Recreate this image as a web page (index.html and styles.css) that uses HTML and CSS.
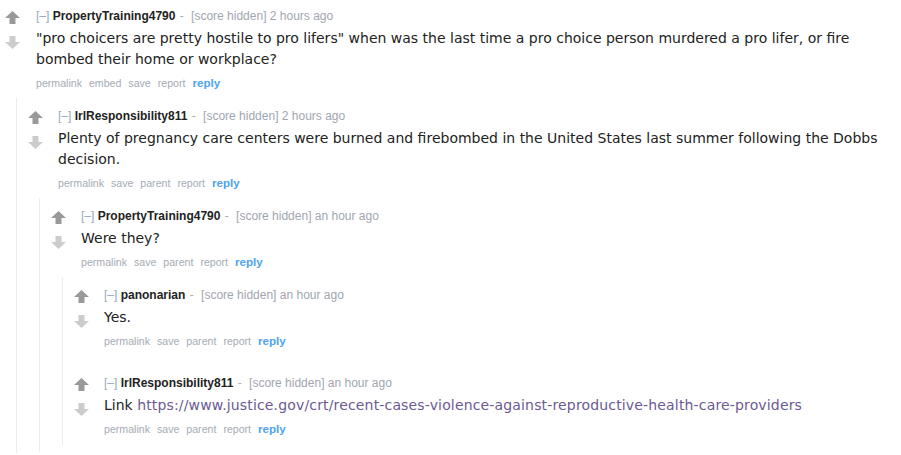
FILE: index.html
```html
<!DOCTYPE html>
<html lang="en">
<head>
  <meta charset="UTF-8">
  <title>comments</title>
  <link rel="stylesheet" href="styles.css">
</head>
<body>
  <div class="commentarea">
    <div class="comment">
      <div class="entry">
        <div class="midcol">
          <svg class="arrow up" viewBox="0 0 15 13"><path d="M7.5 0 L15 7 L10.5 7 L10.5 13 L4.5 13 L4.5 7 L0 7 Z"/></svg>
          <svg class="arrow down" viewBox="0 0 15 13"><path d="M4.5 0 L10.5 0 L10.5 6 L15 6 L7.5 13 L0 6 L4.5 6 Z"/></svg>
        </div>
        <div class="content">
          <p class="tagline"><a class="expand">[&ndash;]</a> <a class="author">PropertyTraining4790</a><span class="sep"> - </span><span class="score">[score hidden]</span> <time>2 hours ago</time></p>
          <div class="md"><p>"pro choicers are pretty hostile to pro lifers" when was the last time a pro choice person murdered a pro lifer, or fire bombed their home or workplace?</p></div>
          <ul class="buttons">
            <li><a>permalink</a></li>
            <li><a>embed</a></li>
            <li><a>save</a></li>
            <li><a>report</a></li>
            <li><a class="reply">reply</a></li>
          </ul>
        </div>
      </div>
      <div class="child">
        <div class="comment">
          <div class="entry">
            <div class="midcol">
              <svg class="arrow up" viewBox="0 0 15 13"><path d="M7.5 0 L15 7 L10.5 7 L10.5 13 L4.5 13 L4.5 7 L0 7 Z"/></svg>
              <svg class="arrow down" viewBox="0 0 15 13"><path d="M4.5 0 L10.5 0 L10.5 6 L15 6 L7.5 13 L0 6 L4.5 6 Z"/></svg>
            </div>
            <div class="content">
              <p class="tagline"><a class="expand">[&ndash;]</a> <a class="author">IrlResponsibility811</a><span class="sep"> - </span><span class="score">[score hidden]</span> <time>2 hours ago</time></p>
              <div class="md"><p>Plenty of pregnancy care centers were burned and firebombed in the United States last summer following the Dobbs decision.</p></div>
              <ul class="buttons">
                <li><a>permalink</a></li>
                <li><a>save</a></li>
                <li><a>parent</a></li>
                <li><a>report</a></li>
                <li><a class="reply">reply</a></li>
              </ul>
            </div>
          </div>
          <div class="child tail">
            <div class="comment">
              <div class="entry">
                <div class="midcol">
                  <svg class="arrow up" viewBox="0 0 15 13"><path d="M7.5 0 L15 7 L10.5 7 L10.5 13 L4.5 13 L4.5 7 L0 7 Z"/></svg>
                  <svg class="arrow down" viewBox="0 0 15 13"><path d="M4.5 0 L10.5 0 L10.5 6 L15 6 L7.5 13 L0 6 L4.5 6 Z"/></svg>
                </div>
                <div class="content">
                  <p class="tagline"><a class="expand">[&ndash;]</a> <a class="author">PropertyTraining4790</a><span class="sep"> - </span><span class="score">[score hidden]</span> <time>an hour ago</time></p>
                  <div class="md"><p>Were they?</p></div>
                  <ul class="buttons">
                    <li><a>permalink</a></li>
                    <li><a>save</a></li>
                    <li><a>parent</a></li>
                    <li><a>report</a></li>
                    <li><a class="reply">reply</a></li>
                  </ul>
                </div>
              </div>
              <div class="child">
                <div class="comment">
                  <div class="entry">
                    <div class="midcol">
                      <svg class="arrow up" viewBox="0 0 15 13"><path d="M7.5 0 L15 7 L10.5 7 L10.5 13 L4.5 13 L4.5 7 L0 7 Z"/></svg>
                      <svg class="arrow down" viewBox="0 0 15 13"><path d="M4.5 0 L10.5 0 L10.5 6 L15 6 L7.5 13 L0 6 L4.5 6 Z"/></svg>
                    </div>
                    <div class="content">
                      <p class="tagline"><a class="expand">[&ndash;]</a> <a class="author">panonarian</a><span class="sep"> - </span><span class="score">[score hidden]</span> <time>an hour ago</time></p>
                      <div class="md"><p>Yes.</p></div>
                      <ul class="buttons">
                        <li><a>permalink</a></li>
                        <li><a>save</a></li>
                        <li><a>parent</a></li>
                        <li><a>report</a></li>
                        <li><a class="reply">reply</a></li>
                      </ul>
                    </div>
                  </div>
                </div>
                <div class="comment">
                  <div class="entry">
                    <div class="midcol">
                      <svg class="arrow up" viewBox="0 0 15 13"><path d="M7.5 0 L15 7 L10.5 7 L10.5 13 L4.5 13 L4.5 7 L0 7 Z"/></svg>
                      <svg class="arrow down" viewBox="0 0 15 13"><path d="M4.5 0 L10.5 0 L10.5 6 L15 6 L7.5 13 L0 6 L4.5 6 Z"/></svg>
                    </div>
                    <div class="content">
                      <p class="tagline"><a class="expand">[&ndash;]</a> <a class="author">IrlResponsibility811</a><span class="sep"> - </span><span class="score">[score hidden]</span> <time>an hour ago</time></p>
                      <div class="md"><p>Link <a class="link" href="#">https://www.justice.gov/crt/recent-cases-violence-against-reproductive-health-care-providers</a></p></div>
                      <ul class="buttons">
                        <li><a>permalink</a></li>
                        <li><a>save</a></li>
                        <li><a>parent</a></li>
                        <li><a>report</a></li>
                        <li><a class="reply">reply</a></li>
                      </ul>
                    </div>
                  </div>
                </div>
              </div>
            </div>
          </div>
        </div>
      </div>
    </div>
  </div>
</body>
</html>
```

FILE: styles.css
```css
body {
  margin: 0;
  background: #ffffff;
  font-family: "Liberation Sans", Arial, sans-serif;
  overflow: hidden;
}

a {
  text-decoration: none;
}

.comment {
  padding-top: 9px;
}

.comment + .comment {
  padding-top: 20px;
}

.entry {
  display: flex;
  padding-left: 5px;
  margin-bottom: 9px;
}

.midcol {
  width: 30px;
  flex: none;
  display: flex;
  flex-direction: column;
  padding-top: 2px;
}

.commentarea > .comment > .entry > .midcol {
  width: 31px;
}

.arrow {
  width: 15px;
  height: 13px;
  display: block;
}

.arrow.up {
  fill: #999999;
}

.arrow.down {
  fill: #cccccc;
  margin-top: 12px;
}

.content {
  flex: 1;
  min-width: 0;
}

.tagline {
  margin: 0;
  font-size: 12px;
  line-height: 14px;
  color: #999999;
  white-space: nowrap;
}

.tagline .expand {
  color: #97a9c0;
}

.tagline .author {
  color: #222222;
  font-weight: bold;
}

.tagline .sep {
  color: #aaaaaa;
  margin-left: 1px;
  margin-right: 4px;
}

.tagline .score,
.tagline time {
  color: #9fa6b0;
}

.md {
  margin: 5px 0 5px;
  padding-right: 18px;
  font-family: Verdana, "DejaVu Sans", sans-serif;
  font-size: 14px;
  line-height: 21px;
  color: #222222;
}

.md p {
  margin: 0;
}

.md .link {
  color: #6b5a92;
  letter-spacing: 0.16px;
}

.buttons {
  list-style: none;
  margin: 0;
  padding: 0;
  display: flex;
  align-items: baseline;
  height: 14px;
  line-height: 14px;
}

.buttons li {
  margin-right: 7px;
}

.buttons a {
  font-size: 10.6px;
  color: #a4abb5;
}

.buttons .reply {
  font-size: 11.6px;
  font-weight: bold;
  color: #4ea3f0;
}

.child {
  margin-left: 16px;
  border-left: 1px solid #ececec;
  padding-left: 6px;
  padding-top: 2px;
  padding-bottom: 1px;
}

.child.tail {
  padding-bottom: 7px;
}
```
